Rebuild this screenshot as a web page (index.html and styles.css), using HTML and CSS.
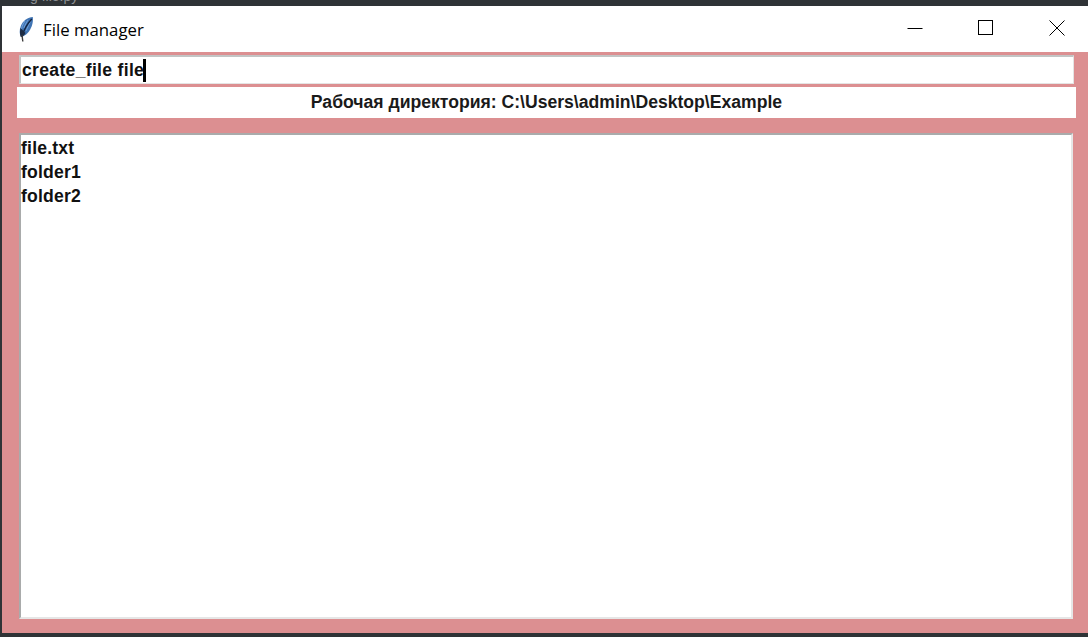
FILE: index.html
```html
<!DOCTYPE html>
<html lang="ru">
<head>
<meta charset="utf-8">
<title>File manager</title>
<link rel="stylesheet" href="styles.css">
</head>
<body>
<div class="topstrip"><span class="topstrip-text">g file.py</span></div>
<div class="window">
  <header class="titlebar">
    <svg class="feather" width="16" height="26" viewBox="0 0 16 26" aria-hidden="true">
      <path d="M14.800 1 C10 1 5 4.500 2.800 10 C1.300 14 1.300 18 3 21 C8 20 12 15 13.800 10 C14.800 7 15.200 4 14.800 1 Z" fill="#3f74b4"/>
      <path d="M7 5 C5 8 4 10 3.500 13 M10 4 C8 7 7 9 6 12 M13 4 C11 8 10 11 8 15" fill="none" stroke="#6f9fd8" stroke-width="1"/>
      <path d="M13.800 3 C10 7 6.500 12 4.500 19" fill="none" stroke="#12233f" stroke-width="1.400"/>
      <path d="M2.500 12 C1.600 16 2 20 3 21 C5 20.500 6.500 19 7.500 17 Z" fill="#1d2c45"/>
      <path d="M4 19 L4.800 25.500" fill="none" stroke="#3a3a3a" stroke-width="1.400"/>
    </svg>
    <span class="title">File manager</span>
    <div class="controls">
      <svg class="ctl" width="16" height="16" viewBox="0 0 16 16" aria-hidden="true"><path d="M0.500 8.500 H15.500" stroke="#000" fill="none"/></svg>
      <svg class="ctl" width="16" height="16" viewBox="0 0 16 16" aria-hidden="true"><rect x="0.500" y="0.500" width="14" height="14" fill="none" stroke="#000" stroke-width="1"/></svg>
      <svg class="ctl" width="16" height="16" viewBox="0 0 16 16" aria-hidden="true"><path d="M0.500 0.500 L15.500 15.500 M15.500 0.500 L0.500 15.500" stroke="#000" fill="none"/></svg>
    </div>
  </header>
  <main class="client">
    <div class="entry"><span class="entry-text">create_file file</span><span class="caret"></span></div>
    <div class="workdir">Рабочая директория: C:\Users\admin\Desktop\Example</div>
    <ul class="listbox">
      <li>file.txt</li>
      <li>folder1</li>
      <li>folder2</li>
    </ul>
  </main>
</div>
</body>
</html>
```
FILE: styles.css
```css
* { box-sizing: border-box; }
html, body { margin: 0; height: 100%; }
body {
  background: #2f3336;
  overflow: hidden;
  display: flex;
  flex-direction: column;
  padding: 0 0 4px 2px;
  font-family: "Liberation Sans", Arial, sans-serif;
}
.topstrip {
  height: 6px;
  overflow: hidden;
  color: #8d9093;
  font-size: 14px;
  padding-left: 28px;
}
.topstrip-text { display: block; margin-top: -11px; line-height: 14px; }
.window { flex: 1; display: flex; flex-direction: column; min-height: 0; }
.titlebar {
  height: 46px;
  background: #fff;
  display: flex;
  align-items: center;
  padding-left: 16px;
}
.feather { margin-right: 9px; margin-top: -1px; }
.title {
  font-family: "Open Sans", "Noto Sans", sans-serif;
  font-size: 16.8px;
  color: #000;
  margin-top: 1px;
}
.controls {
  margin-left: auto;
  display: flex;
  gap: 55px;
  padding-right: 23px;
  margin-top: -3px;
}
.client {
  flex: 1;
  min-height: 0;
  background: #dc8f91;
  display: flex;
  flex-direction: column;
  padding: 3px 12px 14px 15px;
}
.entry {
  height: 29px;
  margin: 0 2px;
  background: #fff;
  border: 1px solid #e4e4e4;
  border-top: 2px solid #c2c4c4;
  border-left: 2px solid #c2c4c4;
  display: flex;
  align-items: center;
  padding-left: 1px;
  font-weight: bold;
  font-size: 17.6px;
  letter-spacing: 0.3px;
  color: #111;
}
.caret { width: 3px; height: 23px; background: #000; margin-left: -1px; }
.workdir {
  height: 31px;
  margin-top: 3px;
  background: #fff;
  display: flex;
  align-items: center;
  justify-content: center;
  font-weight: bold;
  font-size: 17.6px;
  color: #1a1a1a;
}
.listbox {
  flex: 1;
  min-height: 0;
  margin: 15px 3px 0 2px;
  padding: 1px 0 0 0;
  list-style: none;
  background: #fff;
  border: 2px solid #e6e6e6;
  border-top-color: #a9abab;
  border-left-color: #a9abab;
  font-weight: bold;
  font-size: 17.6px;
  letter-spacing: 0.2px;
  color: #111;
}
.listbox li { height: 24px; line-height: 24px; }
```
